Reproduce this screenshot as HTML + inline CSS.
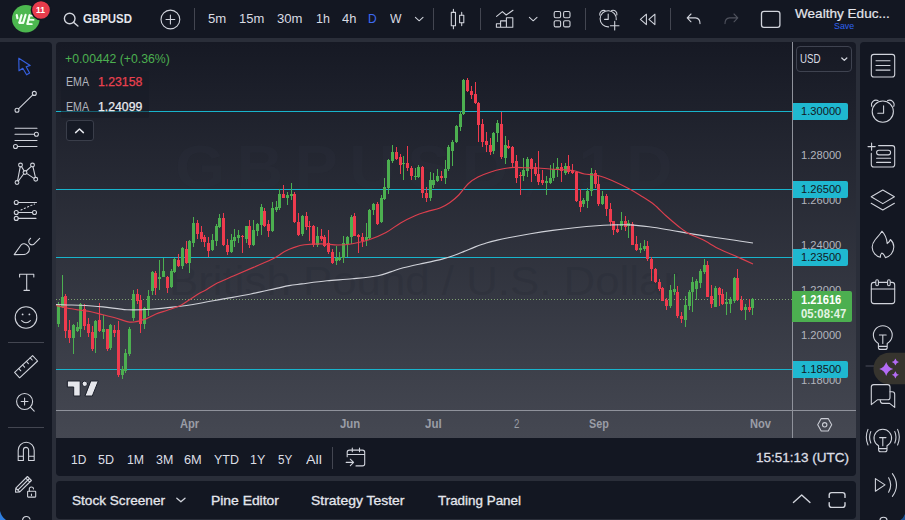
<!DOCTYPE html><html><head><meta charset="utf-8"><title>GBPUSD chart</title><style>

html,body{margin:0;padding:0}
body{width:905px;height:520px;overflow:hidden;position:relative;background:#2a2e39;font-family:"Liberation Sans",Arial,sans-serif}
.p{position:absolute}
.tx{position:absolute;white-space:nowrap;transform-origin:0 0;display:block}
svg{position:absolute;left:0;top:0}

</style></head><body>
<div class="p" style="left:0;top:0;width:905px;height:38px;background:#131722"></div>
<div class="p" style="left:0;top:42px;width:52px;height:478px;background:#131722;border-top-right-radius:4px"></div>
<div class="p" style="left:860px;top:42px;width:45px;height:478px;background:#131722;border-top-left-radius:4px"></div>
<div class="p" style="left:56px;top:42px;width:800px;height:434px;border-radius:4px;overflow:hidden;background:linear-gradient(180deg,#161924 0%,#454852 100%);background-size:100% 396px;background-repeat:no-repeat">
<div class="p" style="left:0;top:396px;width:800px;height:38px;background:#131722"></div>
</div>
<div class="p" style="left:56px;top:481px;width:800px;height:37.5px;background:#131722;border-radius:4px"></div>
<span id="w0" class="tx" style="left:175.00px;top:136.02px;font-size:62.00px;line-height:62.00px;color:rgba(46,50,62,0.24);font-weight:700;transform:scaleX(1.0410);letter-spacing:11px;">GBPUSD, 1D</span>
<span id="w1" class="tx" style="left:169.00px;top:260.84px;font-size:40.00px;line-height:40.00px;color:rgba(38,42,53,0.3);font-weight:400;transform:scaleX(1.0955);">British Pound / U.S. Dollar</span>
<svg width="905" height="520" viewBox="0 0 905 520">
<g shape-rendering="crispEdges"><rect x="56" y="111" width="737" height="1" fill="#18b4cc"/><rect x="56" y="189" width="737" height="1" fill="#18b4cc"/><rect x="56" y="257" width="737" height="1" fill="#18b4cc"/><rect x="56" y="369" width="737" height="1" fill="#18b4cc"/><line x1="56" y1="299.5" x2="793" y2="299.5" stroke="#7da070" stroke-width="1" stroke-dasharray="1 2" shape-rendering="crispEdges"/><rect x="58" y="302" width="1" height="25" fill="#4caf50"/><rect x="57" y="304" width="3" height="20" fill="#4caf50"/><rect x="62" y="275" width="1" height="33" fill="#4caf50"/><rect x="61" y="297" width="3" height="10" fill="#4caf50"/><rect x="65" y="294" width="1" height="44" fill="#ee3b4e"/><rect x="64" y="296" width="3" height="35" fill="#ee3b4e"/><rect x="69" y="320" width="1" height="23" fill="#ee3b4e"/><rect x="68" y="330" width="3" height="8" fill="#ee3b4e"/><rect x="73" y="324" width="1" height="30" fill="#4caf50"/><rect x="72" y="325" width="3" height="13" fill="#4caf50"/><rect x="77" y="322" width="1" height="10" fill="#4caf50"/><rect x="76" y="327" width="3" height="4" fill="#4caf50"/><rect x="80" y="303" width="1" height="34" fill="#4caf50"/><rect x="79" y="304" width="3" height="25" fill="#4caf50"/><rect x="84" y="304" width="1" height="26" fill="#ee3b4e"/><rect x="83" y="309" width="3" height="17" fill="#ee3b4e"/><rect x="88" y="318" width="1" height="19" fill="#ee3b4e"/><rect x="87" y="324" width="3" height="9" fill="#ee3b4e"/><rect x="92" y="326" width="1" height="25" fill="#ee3b4e"/><rect x="91" y="332" width="3" height="17" fill="#ee3b4e"/><rect x="95" y="320" width="1" height="33" fill="#4caf50"/><rect x="94" y="321" width="3" height="17" fill="#4caf50"/><rect x="99" y="303" width="1" height="29" fill="#ee3b4e"/><rect x="98" y="320" width="3" height="11" fill="#ee3b4e"/><rect x="103" y="315" width="1" height="24" fill="#4caf50"/><rect x="102" y="329" width="3" height="3" fill="#4caf50"/><rect x="107" y="329" width="1" height="22" fill="#ee3b4e"/><rect x="106" y="329" width="3" height="20" fill="#ee3b4e"/><rect x="110" y="324" width="1" height="26" fill="#4caf50"/><rect x="109" y="325" width="3" height="23" fill="#4caf50"/><rect x="114" y="325" width="1" height="12" fill="#ee3b4e"/><rect x="113" y="330" width="3" height="3" fill="#ee3b4e"/><rect x="118" y="321" width="1" height="56" fill="#ee3b4e"/><rect x="117" y="330" width="3" height="45" fill="#ee3b4e"/><rect x="122" y="366" width="1" height="13" fill="#4caf50"/><rect x="121" y="369" width="3" height="6" fill="#4caf50"/><rect x="125" y="349" width="1" height="24" fill="#4caf50"/><rect x="124" y="353" width="3" height="18" fill="#4caf50"/><rect x="129" y="327" width="1" height="29" fill="#4caf50"/><rect x="128" y="329" width="3" height="25" fill="#4caf50"/><rect x="133" y="290" width="1" height="31" fill="#4caf50"/><rect x="132" y="294" width="3" height="24" fill="#4caf50"/><rect x="137" y="289" width="1" height="15" fill="#ee3b4e"/><rect x="136" y="294" width="3" height="7" fill="#ee3b4e"/><rect x="140" y="295" width="1" height="38" fill="#ee3b4e"/><rect x="139" y="300" width="3" height="24" fill="#ee3b4e"/><rect x="144" y="307" width="1" height="22" fill="#4caf50"/><rect x="143" y="308" width="3" height="16" fill="#4caf50"/><rect x="148" y="290" width="1" height="26" fill="#4caf50"/><rect x="147" y="296" width="3" height="14" fill="#4caf50"/><rect x="152" y="271" width="1" height="24" fill="#4caf50"/><rect x="151" y="272" width="3" height="19" fill="#4caf50"/><rect x="155" y="271" width="1" height="24" fill="#ee3b4e"/><rect x="154" y="273" width="3" height="15" fill="#ee3b4e"/><rect x="159" y="260" width="1" height="30" fill="#4caf50"/><rect x="158" y="277" width="3" height="2" fill="#4caf50"/><rect x="163" y="258" width="1" height="19" fill="#4caf50"/><rect x="162" y="271" width="3" height="6" fill="#4caf50"/><rect x="167" y="276" width="1" height="17" fill="#ee3b4e"/><rect x="166" y="277" width="3" height="11" fill="#ee3b4e"/><rect x="171" y="269" width="1" height="19" fill="#4caf50"/><rect x="170" y="271" width="3" height="16" fill="#4caf50"/><rect x="174" y="258" width="1" height="15" fill="#4caf50"/><rect x="173" y="259" width="3" height="13" fill="#4caf50"/><rect x="178" y="254" width="1" height="13" fill="#ee3b4e"/><rect x="177" y="260" width="3" height="6" fill="#ee3b4e"/><rect x="182" y="247" width="1" height="22" fill="#4caf50"/><rect x="181" y="248" width="3" height="18" fill="#4caf50"/><rect x="186" y="241" width="1" height="23" fill="#ee3b4e"/><rect x="185" y="249" width="3" height="14" fill="#ee3b4e"/><rect x="189" y="240" width="1" height="33" fill="#4caf50"/><rect x="188" y="241" width="3" height="22" fill="#4caf50"/><rect x="193" y="217" width="1" height="30" fill="#4caf50"/><rect x="192" y="223" width="3" height="20" fill="#4caf50"/><rect x="197" y="220" width="1" height="19" fill="#ee3b4e"/><rect x="196" y="223" width="3" height="11" fill="#ee3b4e"/><rect x="201" y="226" width="1" height="16" fill="#ee3b4e"/><rect x="200" y="232" width="3" height="7" fill="#ee3b4e"/><rect x="204" y="235" width="1" height="12" fill="#ee3b4e"/><rect x="203" y="237" width="3" height="5" fill="#ee3b4e"/><rect x="208" y="237" width="1" height="20" fill="#ee3b4e"/><rect x="207" y="243" width="3" height="8" fill="#ee3b4e"/><rect x="212" y="234" width="1" height="17" fill="#4caf50"/><rect x="211" y="240" width="3" height="10" fill="#4caf50"/><rect x="216" y="224" width="1" height="22" fill="#4caf50"/><rect x="215" y="226" width="3" height="15" fill="#4caf50"/><rect x="219" y="214" width="1" height="14" fill="#4caf50"/><rect x="218" y="218" width="3" height="9" fill="#4caf50"/><rect x="223" y="213" width="1" height="33" fill="#ee3b4e"/><rect x="222" y="218" width="3" height="27" fill="#ee3b4e"/><rect x="227" y="239" width="1" height="16" fill="#ee3b4e"/><rect x="226" y="245" width="3" height="7" fill="#ee3b4e"/><rect x="231" y="234" width="1" height="19" fill="#4caf50"/><rect x="230" y="240" width="3" height="12" fill="#4caf50"/><rect x="234" y="229" width="1" height="18" fill="#4caf50"/><rect x="233" y="237" width="3" height="4" fill="#4caf50"/><rect x="238" y="230" width="1" height="13" fill="#4caf50"/><rect x="237" y="235" width="3" height="3" fill="#4caf50"/><rect x="242" y="235" width="1" height="18" fill="#ee3b4e"/><rect x="241" y="236" width="3" height="1" fill="#ee3b4e"/><rect x="246" y="226" width="1" height="17" fill="#4caf50"/><rect x="245" y="226" width="3" height="13" fill="#4caf50"/><rect x="249" y="220" width="1" height="28" fill="#ee3b4e"/><rect x="248" y="226" width="3" height="19" fill="#ee3b4e"/><rect x="253" y="220" width="1" height="26" fill="#4caf50"/><rect x="252" y="230" width="3" height="15" fill="#4caf50"/><rect x="257" y="223" width="1" height="13" fill="#4caf50"/><rect x="256" y="224" width="3" height="7" fill="#4caf50"/><rect x="261" y="204" width="1" height="31" fill="#4caf50"/><rect x="260" y="207" width="3" height="18" fill="#4caf50"/><rect x="264" y="208" width="1" height="19" fill="#ee3b4e"/><rect x="263" y="211" width="3" height="15" fill="#ee3b4e"/><rect x="268" y="220" width="1" height="17" fill="#ee3b4e"/><rect x="267" y="224" width="3" height="7" fill="#ee3b4e"/><rect x="272" y="202" width="1" height="30" fill="#4caf50"/><rect x="271" y="208" width="3" height="23" fill="#4caf50"/><rect x="276" y="201" width="1" height="11" fill="#4caf50"/><rect x="275" y="207" width="3" height="3" fill="#4caf50"/><rect x="279" y="189" width="1" height="21" fill="#4caf50"/><rect x="278" y="194" width="3" height="14" fill="#4caf50"/><rect x="283" y="185" width="1" height="13" fill="#ee3b4e"/><rect x="282" y="194" width="3" height="4" fill="#ee3b4e"/><rect x="287" y="192" width="1" height="13" fill="#4caf50"/><rect x="286" y="195" width="3" height="3" fill="#4caf50"/><rect x="291" y="183" width="1" height="17" fill="#4caf50"/><rect x="290" y="194" width="3" height="2" fill="#4caf50"/><rect x="294" y="192" width="1" height="31" fill="#ee3b4e"/><rect x="293" y="194" width="3" height="28" fill="#ee3b4e"/><rect x="298" y="213" width="1" height="23" fill="#ee3b4e"/><rect x="297" y="222" width="3" height="13" fill="#ee3b4e"/><rect x="302" y="215" width="1" height="21" fill="#4caf50"/><rect x="301" y="216" width="3" height="18" fill="#4caf50"/><rect x="306" y="212" width="1" height="18" fill="#ee3b4e"/><rect x="305" y="216" width="3" height="11" fill="#ee3b4e"/><rect x="309" y="221" width="1" height="20" fill="#ee3b4e"/><rect x="308" y="226" width="3" height="1" fill="#ee3b4e"/><rect x="313" y="225" width="1" height="22" fill="#ee3b4e"/><rect x="312" y="226" width="3" height="19" fill="#ee3b4e"/><rect x="317" y="227" width="1" height="20" fill="#4caf50"/><rect x="316" y="236" width="3" height="9" fill="#4caf50"/><rect x="321" y="229" width="1" height="12" fill="#ee3b4e"/><rect x="320" y="236" width="3" height="3" fill="#ee3b4e"/><rect x="324" y="235" width="1" height="12" fill="#ee3b4e"/><rect x="323" y="237" width="3" height="9" fill="#ee3b4e"/><rect x="328" y="230" width="1" height="24" fill="#ee3b4e"/><rect x="327" y="243" width="3" height="9" fill="#ee3b4e"/><rect x="332" y="249" width="1" height="15" fill="#ee3b4e"/><rect x="331" y="252" width="3" height="11" fill="#ee3b4e"/><rect x="336" y="246" width="1" height="19" fill="#4caf50"/><rect x="335" y="258" width="3" height="3" fill="#4caf50"/><rect x="339" y="252" width="1" height="9" fill="#4caf50"/><rect x="338" y="257" width="3" height="3" fill="#4caf50"/><rect x="343" y="236" width="1" height="27" fill="#4caf50"/><rect x="342" y="243" width="3" height="15" fill="#4caf50"/><rect x="347" y="236" width="1" height="21" fill="#4caf50"/><rect x="346" y="237" width="3" height="7" fill="#4caf50"/><rect x="351" y="215" width="1" height="29" fill="#4caf50"/><rect x="350" y="217" width="3" height="20" fill="#4caf50"/><rect x="354" y="213" width="1" height="23" fill="#ee3b4e"/><rect x="353" y="216" width="3" height="20" fill="#ee3b4e"/><rect x="358" y="234" width="1" height="19" fill="#ee3b4e"/><rect x="357" y="235" width="3" height="2" fill="#ee3b4e"/><rect x="362" y="233" width="1" height="14" fill="#ee3b4e"/><rect x="361" y="237" width="3" height="4" fill="#ee3b4e"/><rect x="366" y="223" width="1" height="23" fill="#4caf50"/><rect x="365" y="237" width="3" height="3" fill="#4caf50"/><rect x="369" y="209" width="1" height="30" fill="#4caf50"/><rect x="368" y="210" width="3" height="28" fill="#4caf50"/><rect x="373" y="203" width="1" height="12" fill="#4caf50"/><rect x="372" y="204" width="3" height="6" fill="#4caf50"/><rect x="377" y="202" width="1" height="23" fill="#ee3b4e"/><rect x="376" y="204" width="3" height="20" fill="#ee3b4e"/><rect x="381" y="195" width="1" height="28" fill="#4caf50"/><rect x="380" y="198" width="3" height="24" fill="#4caf50"/><rect x="384" y="178" width="1" height="22" fill="#4caf50"/><rect x="383" y="187" width="3" height="12" fill="#4caf50"/><rect x="388" y="159" width="1" height="35" fill="#4caf50"/><rect x="387" y="160" width="3" height="28" fill="#4caf50"/><rect x="392" y="145" width="1" height="18" fill="#4caf50"/><rect x="391" y="152" width="3" height="9" fill="#4caf50"/><rect x="396" y="147" width="1" height="13" fill="#ee3b4e"/><rect x="395" y="152" width="3" height="7" fill="#ee3b4e"/><rect x="400" y="154" width="1" height="20" fill="#ee3b4e"/><rect x="399" y="157" width="3" height="8" fill="#ee3b4e"/><rect x="403" y="156" width="1" height="24" fill="#4caf50"/><rect x="402" y="163" width="3" height="1" fill="#4caf50"/><rect x="407" y="146" width="1" height="25" fill="#ee3b4e"/><rect x="406" y="163" width="3" height="5" fill="#ee3b4e"/><rect x="411" y="166" width="1" height="14" fill="#ee3b4e"/><rect x="410" y="168" width="3" height="8" fill="#ee3b4e"/><rect x="415" y="168" width="1" height="12" fill="#4caf50"/><rect x="414" y="176" width="3" height="1" fill="#4caf50"/><rect x="418" y="165" width="1" height="13" fill="#4caf50"/><rect x="417" y="167" width="3" height="10" fill="#4caf50"/><rect x="422" y="166" width="1" height="32" fill="#ee3b4e"/><rect x="421" y="167" width="3" height="26" fill="#ee3b4e"/><rect x="426" y="187" width="1" height="15" fill="#ee3b4e"/><rect x="425" y="193" width="3" height="5" fill="#ee3b4e"/><rect x="430" y="172" width="1" height="29" fill="#4caf50"/><rect x="429" y="180" width="3" height="18" fill="#4caf50"/><rect x="433" y="173" width="1" height="15" fill="#4caf50"/><rect x="432" y="180" width="3" height="5" fill="#4caf50"/><rect x="437" y="169" width="1" height="13" fill="#4caf50"/><rect x="436" y="176" width="3" height="5" fill="#4caf50"/><rect x="441" y="171" width="1" height="10" fill="#ee3b4e"/><rect x="440" y="176" width="3" height="2" fill="#ee3b4e"/><rect x="445" y="160" width="1" height="24" fill="#4caf50"/><rect x="444" y="169" width="3" height="9" fill="#4caf50"/><rect x="448" y="145" width="1" height="26" fill="#4caf50"/><rect x="447" y="147" width="3" height="22" fill="#4caf50"/><rect x="452" y="140" width="1" height="26" fill="#4caf50"/><rect x="451" y="142" width="3" height="9" fill="#4caf50"/><rect x="456" y="125" width="1" height="18" fill="#4caf50"/><rect x="455" y="126" width="3" height="16" fill="#4caf50"/><rect x="460" y="111" width="1" height="20" fill="#4caf50"/><rect x="459" y="114" width="3" height="13" fill="#4caf50"/><rect x="463" y="79" width="1" height="36" fill="#4caf50"/><rect x="462" y="80" width="3" height="34" fill="#4caf50"/><rect x="467" y="78" width="1" height="14" fill="#ee3b4e"/><rect x="466" y="80" width="3" height="11" fill="#ee3b4e"/><rect x="471" y="86" width="1" height="13" fill="#ee3b4e"/><rect x="470" y="91" width="3" height="4" fill="#ee3b4e"/><rect x="475" y="82" width="1" height="22" fill="#ee3b4e"/><rect x="474" y="94" width="3" height="9" fill="#ee3b4e"/><rect x="478" y="102" width="1" height="40" fill="#ee3b4e"/><rect x="477" y="103" width="3" height="22" fill="#ee3b4e"/><rect x="482" y="119" width="1" height="28" fill="#ee3b4e"/><rect x="481" y="124" width="3" height="18" fill="#ee3b4e"/><rect x="486" y="132" width="1" height="20" fill="#ee3b4e"/><rect x="485" y="141" width="3" height="4" fill="#ee3b4e"/><rect x="490" y="138" width="1" height="17" fill="#ee3b4e"/><rect x="489" y="145" width="3" height="7" fill="#ee3b4e"/><rect x="493" y="132" width="1" height="22" fill="#4caf50"/><rect x="492" y="133" width="3" height="18" fill="#4caf50"/><rect x="497" y="120" width="1" height="22" fill="#4caf50"/><rect x="496" y="123" width="3" height="10" fill="#4caf50"/><rect x="501" y="112" width="1" height="47" fill="#ee3b4e"/><rect x="500" y="124" width="3" height="33" fill="#ee3b4e"/><rect x="505" y="136" width="1" height="28" fill="#4caf50"/><rect x="504" y="145" width="3" height="13" fill="#4caf50"/><rect x="508" y="140" width="1" height="9" fill="#ee3b4e"/><rect x="507" y="146" width="3" height="2" fill="#ee3b4e"/><rect x="512" y="146" width="1" height="21" fill="#ee3b4e"/><rect x="511" y="147" width="3" height="16" fill="#ee3b4e"/><rect x="516" y="155" width="1" height="28" fill="#ee3b4e"/><rect x="515" y="161" width="3" height="17" fill="#ee3b4e"/><rect x="520" y="172" width="1" height="23" fill="#ee3b4e"/><rect x="519" y="175" width="3" height="1" fill="#ee3b4e"/><rect x="523" y="158" width="1" height="23" fill="#4caf50"/><rect x="522" y="170" width="3" height="6" fill="#4caf50"/><rect x="527" y="157" width="1" height="20" fill="#4caf50"/><rect x="526" y="159" width="3" height="12" fill="#4caf50"/><rect x="531" y="158" width="1" height="24" fill="#ee3b4e"/><rect x="530" y="159" width="3" height="10" fill="#ee3b4e"/><rect x="535" y="163" width="1" height="13" fill="#ee3b4e"/><rect x="534" y="167" width="3" height="7" fill="#ee3b4e"/><rect x="538" y="151" width="1" height="34" fill="#ee3b4e"/><rect x="537" y="174" width="3" height="8" fill="#ee3b4e"/><rect x="542" y="170" width="1" height="15" fill="#ee3b4e"/><rect x="541" y="180" width="3" height="3" fill="#ee3b4e"/><rect x="546" y="176" width="1" height="19" fill="#4caf50"/><rect x="545" y="181" width="3" height="2" fill="#4caf50"/><rect x="550" y="165" width="1" height="19" fill="#4caf50"/><rect x="549" y="178" width="3" height="5" fill="#4caf50"/><rect x="553" y="163" width="1" height="18" fill="#4caf50"/><rect x="552" y="169" width="3" height="9" fill="#4caf50"/><rect x="557" y="158" width="1" height="19" fill="#4caf50"/><rect x="556" y="167" width="3" height="3" fill="#4caf50"/><rect x="561" y="163" width="1" height="19" fill="#ee3b4e"/><rect x="560" y="167" width="3" height="4" fill="#ee3b4e"/><rect x="565" y="163" width="1" height="12" fill="#4caf50"/><rect x="564" y="166" width="3" height="7" fill="#4caf50"/><rect x="568" y="155" width="1" height="19" fill="#ee3b4e"/><rect x="567" y="166" width="3" height="6" fill="#ee3b4e"/><rect x="572" y="164" width="1" height="10" fill="#ee3b4e"/><rect x="571" y="170" width="3" height="3" fill="#ee3b4e"/><rect x="576" y="171" width="1" height="31" fill="#ee3b4e"/><rect x="575" y="172" width="3" height="29" fill="#ee3b4e"/><rect x="580" y="189" width="1" height="23" fill="#ee3b4e"/><rect x="579" y="201" width="3" height="6" fill="#ee3b4e"/><rect x="583" y="198" width="1" height="9" fill="#4caf50"/><rect x="582" y="200" width="3" height="4" fill="#4caf50"/><rect x="587" y="188" width="1" height="20" fill="#4caf50"/><rect x="586" y="191" width="3" height="10" fill="#4caf50"/><rect x="591" y="168" width="1" height="28" fill="#4caf50"/><rect x="590" y="173" width="3" height="18" fill="#4caf50"/><rect x="595" y="170" width="1" height="18" fill="#ee3b4e"/><rect x="594" y="173" width="3" height="11" fill="#ee3b4e"/><rect x="598" y="175" width="1" height="31" fill="#ee3b4e"/><rect x="597" y="184" width="3" height="20" fill="#ee3b4e"/><rect x="602" y="191" width="1" height="14" fill="#4caf50"/><rect x="601" y="196" width="3" height="8" fill="#4caf50"/><rect x="606" y="194" width="1" height="22" fill="#ee3b4e"/><rect x="605" y="196" width="3" height="13" fill="#ee3b4e"/><rect x="610" y="203" width="1" height="23" fill="#ee3b4e"/><rect x="609" y="209" width="3" height="13" fill="#ee3b4e"/><rect x="613" y="221" width="1" height="14" fill="#ee3b4e"/><rect x="612" y="221" width="3" height="9" fill="#ee3b4e"/><rect x="617" y="224" width="1" height="9" fill="#ee3b4e"/><rect x="616" y="229" width="3" height="3" fill="#ee3b4e"/><rect x="621" y="212" width="1" height="18" fill="#4caf50"/><rect x="620" y="221" width="3" height="5" fill="#4caf50"/><rect x="625" y="216" width="1" height="15" fill="#ee3b4e"/><rect x="624" y="221" width="3" height="6" fill="#ee3b4e"/><rect x="628" y="220" width="1" height="18" fill="#4caf50"/><rect x="627" y="223" width="3" height="3" fill="#4caf50"/><rect x="632" y="222" width="1" height="23" fill="#ee3b4e"/><rect x="631" y="224" width="3" height="21" fill="#ee3b4e"/><rect x="636" y="236" width="1" height="15" fill="#ee3b4e"/><rect x="635" y="244" width="3" height="6" fill="#ee3b4e"/><rect x="640" y="243" width="1" height="10" fill="#4caf50"/><rect x="639" y="248" width="3" height="2" fill="#4caf50"/><rect x="644" y="240" width="1" height="11" fill="#4caf50"/><rect x="643" y="246" width="3" height="3" fill="#4caf50"/><rect x="647" y="241" width="1" height="20" fill="#ee3b4e"/><rect x="646" y="246" width="3" height="13" fill="#ee3b4e"/><rect x="651" y="257" width="1" height="24" fill="#ee3b4e"/><rect x="650" y="259" width="3" height="10" fill="#ee3b4e"/><rect x="655" y="268" width="1" height="15" fill="#ee3b4e"/><rect x="654" y="269" width="3" height="13" fill="#ee3b4e"/><rect x="659" y="279" width="1" height="12" fill="#ee3b4e"/><rect x="658" y="282" width="3" height="7" fill="#ee3b4e"/><rect x="662" y="287" width="1" height="14" fill="#ee3b4e"/><rect x="661" y="288" width="3" height="13" fill="#ee3b4e"/><rect x="666" y="298" width="1" height="12" fill="#ee3b4e"/><rect x="665" y="300" width="3" height="6" fill="#ee3b4e"/><rect x="670" y="285" width="1" height="23" fill="#4caf50"/><rect x="669" y="290" width="3" height="16" fill="#4caf50"/><rect x="674" y="274" width="1" height="21" fill="#4caf50"/><rect x="673" y="289" width="3" height="3" fill="#4caf50"/><rect x="677" y="286" width="1" height="32" fill="#ee3b4e"/><rect x="676" y="292" width="3" height="24" fill="#ee3b4e"/><rect x="681" y="312" width="1" height="11" fill="#ee3b4e"/><rect x="680" y="316" width="3" height="3" fill="#ee3b4e"/><rect x="685" y="296" width="1" height="31" fill="#4caf50"/><rect x="684" y="305" width="3" height="15" fill="#4caf50"/><rect x="689" y="290" width="1" height="20" fill="#4caf50"/><rect x="688" y="292" width="3" height="14" fill="#4caf50"/><rect x="692" y="277" width="1" height="35" fill="#4caf50"/><rect x="691" y="282" width="3" height="10" fill="#4caf50"/><rect x="696" y="279" width="1" height="21" fill="#4caf50"/><rect x="695" y="281" width="3" height="8" fill="#4caf50"/><rect x="700" y="269" width="1" height="19" fill="#4caf50"/><rect x="699" y="271" width="3" height="12" fill="#4caf50"/><rect x="704" y="259" width="1" height="15" fill="#4caf50"/><rect x="703" y="265" width="3" height="7" fill="#4caf50"/><rect x="707" y="261" width="1" height="36" fill="#ee3b4e"/><rect x="706" y="265" width="3" height="32" fill="#ee3b4e"/><rect x="711" y="285" width="1" height="23" fill="#ee3b4e"/><rect x="710" y="296" width="3" height="8" fill="#ee3b4e"/><rect x="715" y="286" width="1" height="21" fill="#4caf50"/><rect x="714" y="288" width="3" height="19" fill="#4caf50"/><rect x="719" y="287" width="1" height="19" fill="#ee3b4e"/><rect x="718" y="288" width="3" height="7" fill="#ee3b4e"/><rect x="722" y="289" width="1" height="16" fill="#ee3b4e"/><rect x="721" y="294" width="3" height="10" fill="#ee3b4e"/><rect x="726" y="292" width="1" height="23" fill="#4caf50"/><rect x="725" y="302" width="3" height="2" fill="#4caf50"/><rect x="730" y="297" width="1" height="16" fill="#4caf50"/><rect x="729" y="299" width="3" height="5" fill="#4caf50"/><rect x="734" y="277" width="1" height="26" fill="#4caf50"/><rect x="733" y="278" width="3" height="23" fill="#4caf50"/><rect x="737" y="269" width="1" height="32" fill="#ee3b4e"/><rect x="736" y="278" width="3" height="22" fill="#ee3b4e"/><rect x="741" y="296" width="1" height="15" fill="#ee3b4e"/><rect x="740" y="300" width="3" height="10" fill="#ee3b4e"/><rect x="745" y="304" width="1" height="16" fill="#4caf50"/><rect x="744" y="307" width="3" height="3" fill="#4caf50"/><rect x="749" y="299" width="1" height="13" fill="#ee3b4e"/><rect x="748" y="307" width="3" height="3" fill="#ee3b4e"/><rect x="752" y="298" width="1" height="17" fill="#4caf50"/><rect x="751" y="299" width="3" height="9" fill="#4caf50"/></g>
<path d="M56.0 304.5 C57.8 304.6 63.2 304.9 67.0 305.0 C70.8 305.1 73.0 304.9 79.0 305.2 C85.0 305.5 95.0 306.1 103.0 306.9 C111.0 307.7 119.0 309.4 127.0 309.8 C135.0 310.2 143.0 309.8 151.0 309.3 C159.0 308.8 166.8 307.9 175.0 306.9 C183.2 305.9 191.6 304.6 200.0 303.2 C208.4 301.8 216.9 300.1 225.4 298.6 C233.9 297.1 242.3 295.7 250.8 294.0 C259.3 292.3 269.8 289.8 276.2 288.4 C282.6 287.0 284.8 286.4 289.0 285.6 C293.2 284.9 295.4 284.7 301.7 283.9 C308.0 283.1 318.5 281.6 327.0 280.8 C335.5 280.0 344.0 279.7 352.5 278.8 C361.0 277.9 371.5 276.9 377.9 275.7 C384.2 274.5 386.4 273.2 390.6 271.9 C394.8 270.6 398.4 269.1 403.3 267.8 C408.2 266.5 413.5 265.4 420.0 264.0 C426.5 262.6 436.6 260.5 442.1 259.1 C447.6 257.7 449.4 257.1 453.1 255.8 C456.8 254.5 460.5 252.9 464.2 251.4 C467.9 249.9 471.5 248.3 475.2 246.9 C478.9 245.5 482.6 244.1 486.3 243.0 C490.0 241.9 493.6 241.0 497.3 240.1 C501.0 239.2 502.9 238.8 508.4 237.7 C513.9 236.6 523.1 234.9 530.5 233.7 C537.9 232.5 545.2 231.4 552.6 230.4 C560.0 229.4 567.3 228.5 574.7 227.7 C582.1 226.9 590.9 226.1 596.8 225.7 C602.7 225.2 604.5 225.1 610.0 225.0 C615.5 224.9 623.5 224.6 630.0 224.9 C636.5 225.2 642.2 225.9 649.0 226.8 C655.8 227.7 664.2 229.1 671.0 230.2 C677.8 231.3 683.2 232.5 690.0 233.6 C696.8 234.7 704.5 235.9 712.0 237.0 C719.5 238.1 728.2 239.3 735.0 240.3 C741.8 241.3 750.0 242.6 753.0 243.0" fill="none" stroke="#cfd1d8" stroke-width="1.15"/><path d="M56.0 305.5 C57.8 305.9 63.2 307.2 67.0 308.0 C70.8 308.8 75.0 309.4 79.0 310.0 C83.0 310.6 87.0 310.9 91.0 311.7 C95.0 312.5 99.0 313.8 103.0 314.8 C107.0 315.8 111.0 316.6 115.0 317.7 C119.0 318.8 123.8 320.9 127.0 321.6 C130.2 322.3 130.8 322.4 134.0 322.0 C137.2 321.6 142.3 320.2 146.0 318.9 C149.7 317.6 152.3 315.5 156.0 314.0 C159.7 312.5 164.0 311.4 168.0 310.0 C172.0 308.6 176.4 307.4 180.0 305.7 C183.6 304.0 186.4 301.7 189.6 299.7 C192.8 297.7 196.4 295.0 199.0 293.5 C201.6 292.0 201.9 292.2 205.0 290.5 C208.1 288.8 212.5 285.4 217.3 283.0 C222.1 280.6 228.0 278.4 234.0 275.8 C240.0 273.2 246.6 270.4 253.4 267.4 C260.2 264.4 269.8 260.3 275.0 257.7 C280.2 255.0 281.4 253.2 284.6 251.5 C287.8 249.8 290.9 248.5 294.2 247.4 C297.5 246.3 299.9 245.4 304.4 244.8 C308.9 244.2 315.4 243.8 321.0 243.8 C326.6 243.8 332.8 245.0 338.0 245.0 C343.2 245.0 347.3 244.7 352.5 243.8 C357.7 242.9 363.4 241.7 369.0 239.8 C374.6 237.9 380.7 235.3 386.0 232.5 C391.3 229.7 395.8 225.7 400.6 222.9 C405.4 220.1 410.6 217.6 415.0 215.7 C419.4 213.8 422.8 212.9 427.0 211.6 C431.2 210.3 436.2 209.5 440.0 208.0 C443.8 206.5 446.9 204.7 450.0 202.5 C453.1 200.3 455.7 198.2 458.8 195.0 C461.9 191.8 465.3 186.5 468.5 183.5 C471.7 180.5 474.4 178.9 478.0 177.0 C481.6 175.1 486.0 173.5 490.0 172.2 C494.0 170.9 498.0 169.8 502.0 169.0 C506.0 168.2 510.0 167.6 514.0 167.4 C518.0 167.2 522.0 167.7 526.0 167.8 C530.0 167.9 534.0 167.8 538.0 168.0 C542.0 168.2 545.6 168.7 550.0 169.0 C554.4 169.3 560.4 169.5 564.6 169.8 C568.8 170.1 571.7 170.3 575.0 171.0 C578.3 171.7 580.4 173.2 584.4 174.0 C588.4 174.8 594.0 174.6 598.8 175.8 C603.6 177.0 607.8 178.8 613.0 181.0 C618.2 183.2 625.2 186.7 630.0 189.3 C634.8 191.9 638.0 194.0 642.0 196.5 C646.0 199.0 650.0 201.3 654.0 204.5 C658.0 207.7 662.0 212.2 666.0 215.8 C670.0 219.4 674.3 223.1 678.0 226.0 C681.7 228.9 683.9 230.9 688.0 233.2 C692.1 235.5 697.3 237.0 702.5 239.6 C707.7 242.2 713.7 246.2 719.3 249.0 C724.9 251.8 730.4 253.8 736.0 256.2 C741.6 258.8 750.2 262.7 753.0 264.0" fill="none" stroke="#dc3f4e" stroke-width="1.15"/>
<g shape-rendering="crispEdges"><rect x="56" y="410" width="800" height="1" fill="#8f929b"/><rect x="792" y="42" width="1" height="396" fill="#8f929b"/></g>
</svg>
<div class="p" style="left:61px;top:71px;width:88px;height:47px;background:rgba(24,28,39,0.55);border-radius:2px"></div>
<div class="p" style="left:65.5px;top:120px;width:28.5px;height:20.5px;border:1px solid #3a3e4a;border-radius:3px;background:#161a25;box-sizing:border-box"></div>
<div class="p" style="left:796px;top:46px;width:56px;height:25.5px;border:1px solid #3f4350;border-radius:4px;box-sizing:border-box"></div>
<svg width="905" height="520" viewBox="0 0 905 520" fill="none" stroke="#d1d4dc" stroke-width="1.08" stroke-linecap="round" stroke-linejoin="round">
<circle cx="25.8" cy="18.8" r="13.8" fill="#4cb74f" stroke="none"/>
<g stroke="#f1fff1" stroke-width="2.2" stroke-linecap="round"><path d="M16.8 15.2L17.4 18.2"/><path d="M21.6 15.2L19.4 22.6"/><path d="M25.6 14.8L23.2 22.8"/><path d="M19.6 22.8L22.8 22.9"/><path d="M29.6 15.2L27.4 24"/><path d="M29.8 15.6L33.4 15.6" stroke-width="1.8"/><path d="M28.8 19.6L33.6 19.8" stroke-width="1.8"/><path d="M27.6 24L31.8 24.2" stroke-width="1.8"/></g>
<circle cx="41" cy="10" r="9.6" fill="#e93c4c" stroke="#131722" stroke-width="1.5"/>
<circle cx="69.7" cy="18.5" r="5.3" stroke-width="1.4"/><path d="M73.6 22.4L77.9 26" stroke-width="1.4"/>
<circle cx="170.4" cy="19.5" r="9.4"/><path d="M166 19.5H174.8M170.4 15.1V23.9"/>
<rect x="194" y="8" width="1" height="22" fill="#434651" stroke="none" shape-rendering="crispEdges"/>
<rect x="433" y="8" width="1" height="22" fill="#434651" stroke="none" shape-rendering="crispEdges"/>
<rect x="480" y="8" width="1" height="22" fill="#434651" stroke="none" shape-rendering="crispEdges"/>
<rect x="585" y="8" width="1" height="22" fill="#434651" stroke="none" shape-rendering="crispEdges"/>
<rect x="670" y="8" width="1" height="22" fill="#434651" stroke="none" shape-rendering="crispEdges"/>
<path d="M415.4 17.4L419.2 20.8L423 17.4"/>
<path d="M529.4 17.4L533.2 20.8L537 17.4"/>
<rect x="451.3" y="12.4" width="4.2" height="13.3"/><path d="M453.4 9.2V12.4M453.4 25.7V28.8"/>
<rect x="459.6" y="15.3" width="4.2" height="7.5"/><path d="M461.7 12.4V15.3M461.7 22.8V25.6"/>
<path d="M496.4 27.3V23.8H500.6V27.3M500.6 27.3V20.9H506.4V27.3M506.4 27.3V17.7H512.8V27.3H496.4"/>
<path d="M496.6 16.4L502.4 11.6L506.2 15L513 10.2"/>
<rect x="554.2" y="11.5" width="6.4" height="6.2" rx="1.4"/>
<rect x="563.6" y="11.5" width="6.4" height="6.2" rx="1.4"/>
<rect x="554.2" y="20.7" width="6.4" height="6.2" rx="1.4"/>
<rect x="563.6" y="20.7" width="6.4" height="6.2" rx="1.4"/>
<path d="M608.6 26.9A8.1 8.1 0 1 1 616.25 19.8"/>
<path d="M599.8 15.2A4 4 0 0 1 605 10.6M611.6 10.5A4 4 0 0 1 616.9 15"/>
<path d="M608.2 14V19.4H604.6"/>
<path d="M610.4 25.7H619M614.7 21.4V30"/>
<path d="M646.4 14.2V24.6L640.4 19.4Z"/><path d="M654.9 14.2V24.6L648.9 19.4Z"/>
<path d="M691 14L687.2 17.9L691 21.8M687.4 17.9H695.5Q700 18.2 700 23.6"/>
<path d="M734 14L737.8 17.9L734 21.8M737.6 17.9H729.5Q725 18.2 725 23.6" stroke="#50535e"/>
<rect x="761.5" y="11.4" width="18.4" height="16" rx="2.4" stroke-width="1.3"/>
<path d="M841.8 58L844.3 60.4L846.8 58" stroke-width="1.3"/>
<path d="M75.6 132.6L79.5 129L83.4 132.6" stroke="#e4e6ec" stroke-width="1.5"/>
<path d="M18.8 58.2L19 70.8L22.8 68.3L26.6 74.8L29.6 73L26.2 66.8L30.2 65.4Z" stroke="#3560e0" stroke-width="1.15"/>
<circle cx="34.3" cy="93.4" r="2"/><circle cx="17" cy="110.2" r="2"/><path d="M18.5 108.8L32.8 94.8"/>
<path d="M15 128.3H37M15 134.3H34.5M15 140.5H37M17.5 146.5H37"/><circle cx="36.4" cy="134.3" r="2"/><circle cx="15.5" cy="146.5" r="2"/>
<path d="M17.6 180.6L20.2 166.9M21.5 166.6L24.2 171M26.2 171L31.3 166.4M33 166.9L35.4 177.4M18.4 181L23.6 174M26.6 173.4L34 178.4"/>
<circle cx="20.50" cy="165.00" r="1.9"/>
<circle cx="32.50" cy="165.00" r="1.9"/>
<circle cx="25.00" cy="172.50" r="1.9"/>
<circle cx="17.00" cy="182.50" r="1.9"/>
<circle cx="35.75" cy="179.25" r="1.9"/>
<circle cx="16.25" cy="202.5" r="2"/><path d="M18.3 202.5H36.5"/>
<circle cx="16.25" cy="212.5" r="2"/><circle cx="34.5" cy="212.5" r="2"/><path d="M18.3 212.5H32.4"/>
<circle cx="16.25" cy="218.4" r="2"/><path d="M18.3 218.4H36"/>
<path d="M21 210L34.5 204" stroke-dasharray="1.2 2.4"/>
<path d="M14.2 254.6L21.2 244.8Q22.6 243.4 24.4 243.8Q28.6 245 29.5 248.8Q29.6 251.5 27 253.4Q25.8 254.3 24.5 254.4Z"/><path d="M30.6 238.2Q28.2 240 28.8 242.4Q29.8 245.2 32.6 244.8Q33.6 244.6 34.5 243.6L39.7 238.3"/>
<path d="M19.6 277V274.3H33.8V277M26.7 274.3V290.4M24 290.4H29.4"/>
<circle cx="26" cy="317.5" r="10.8"/><path d="M21.6 320.6Q26 325 30.4 320.6"/><circle cx="22.6" cy="314.4" r="0.9" fill="#d1d4dc" stroke="none"/><circle cx="29.4" cy="314.4" r="0.9" fill="#d1d4dc" stroke="none"/>
<rect x="8" y="342" width="36" height="1" fill="#434651" stroke="none" shape-rendering="crispEdges"/>
<rect x="8" y="427" width="36" height="1" fill="#434651" stroke="none" shape-rendering="crispEdges"/>
<path d="M14.6 372.4L32.6 355.6L37.6 361L19.6 377.8Z"/><path d="M18.8 368.6L20.8 370.8M22.6 365L24.6 367.2M26.4 361.4L28.4 363.6M30.2 357.8L32.2 360"/>
<circle cx="24.6" cy="401.5" r="8"/><path d="M30.4 407.2L34.2 411.2M21.2 401.5H28M24.6 398.1V404.9"/>
<path d="M18.2 460.5V450.2A8 8 0 0 1 34.2 450.2V460.5H28.6V450A2.6 2.6 0 0 0 23.4 450V460.5ZM18.2 456.3H23.4M28.6 456.3H34.2"/>
<path d="M15.5 492.3L15.8 488.1L27.4 476.5L31.4 480.5L19.8 491.9ZM15.8 488.1L19.8 491.9M17.8 490.1L29.4 478.5M25.7 478.1L29.8 482.1"/>
<rect x="27.6" y="491.2" width="8.1" height="5.9" rx="0.6"/><path d="M29.3 491.2V489.2A2.1 2.1 0 0 1 33.5 488.9M31.45 494V495.6"/>
<path d="M22.6 519.6A3.8 3.8 0 0 1 30 519.2"/>
<rect x="871.3" y="54.4" width="23.4" height="22.6" rx="2.6"/><path d="M876 60.8H890M876 65.5H890M876 70.1H890"/>
<circle cx="882.8" cy="111.6" r="10.6"/><path d="M871.8 106.4A4.6 4.6 0 0 1 878 100.6M887.6 100.6A4.6 4.6 0 0 1 893.8 106.4M883.6 105.8V113.2H877.8"/>
<path d="M868 146.6H875.2M871.6 143V150.2"/>
<path d="M878.6 145.6H892.2Q894.7 145.6 894.7 148.2V164.4Q894.7 167 892.2 167H873.8Q871.3 167 871.3 164.4V153.4"/>
<rect x="876.6" y="150.3" width="14" height="4.6" rx="2.3"/><path d="M876.6 158.3H890.6M876.6 162.4H890.6"/>
<path d="M882.8 190L894.4 196.8L882.8 203.6L871.2 196.8ZM871.2 203.2L882.8 210L894.4 203.2"/>
<path d="M881.9 231.2C880 234.5 877 237.5 875 240C872.8 242.8 872.1 245.2 872.2 247.5C872.4 252.5 876 256.5 880.4 257.3C880.2 255.5 880.8 254 881.8 253.1C883.2 253.8 884.6 255.4 885.4 257.6C890.5 256.5 893.6 252 893.8 247C893.9 243.8 892.4 241.4 890.4 239.5C889.8 241.5 888.6 242.8 887.2 243.6C886.8 238.5 884.8 234.2 881.9 231.2Z"/>
<rect x="871.3" y="282.4" width="23.4" height="21.2" rx="2.6"/><path d="M871.3 289H894.7"/><rect x="875.8" y="279.8" width="2.6" height="6" rx="1.2" fill="#131722"/><rect x="887.6" y="279.8" width="2.6" height="6" rx="1.2" fill="#131722"/>
<path d="M878.4 343.4A9.4 9.4 0 1 1 887.2 343.4V346.4H878.4ZM878.4 346.4V347.4Q878.4 349.4 880.4 349.4H885.2Q887.2 349.4 887.2 347.4V346.4M879.4 335H886.2M882.8 335V343.4"/>
<path d="M866 366H874" stroke="#4c4f5a" stroke-width="1"/>
<rect x="873.5" y="352.7" width="50" height="31.6" rx="15.8" fill="#36342e" stroke="none"/>
<path d="M886.20 361.90Q887.74 367.36 893.20 368.90Q887.74 370.44 886.20 375.90Q884.66 370.44 879.20 368.90Q884.66 367.36 886.20 361.90Z" fill="#b36bf5" stroke="none"/>
<path d="M895.40 358.40Q896.19 361.21 899.00 362.00Q896.19 362.79 895.40 365.60Q894.61 362.79 891.80 362.00Q894.61 361.21 895.40 358.40Z" fill="#b36bf5" stroke="none"/>
<path d="M895.40 371.20Q896.19 374.01 899.00 374.80Q896.19 375.59 895.40 378.40Q894.61 375.59 891.80 374.80Q894.61 374.01 895.40 371.20Z" fill="#b36bf5" stroke="none"/>
<path d="M871.3 404.6V387Q871.3 384.6 873.8 384.6H887.6Q890 384.6 890 387V397.4Q890 399.8 887.6 399.8H877.4Z"/>
<path d="M890 391.8H892.2Q894.7 391.8 894.7 394.2V407.4L889.6 403.4H882.6Q880.4 403.4 880.2 400"/>
<path d="M878.6 445.8A8.8 8.8 0 1 1 887 445.8V448.6H878.6ZM878.6 448.6V449.8Q878.6 451.8 880.6 451.8H885Q887 451.8 887 449.8V448.6M879.6 437.6H886M882.8 437.6V445.8"/>
<path d="M870.8 431.6Q868.4 437 870.8 443M868 429.4Q864.6 437 868 445M894.8 431.6Q897.2 437 894.8 443M897.6 429.4Q901 437 897.6 445"/>
<path d="M875.4 478.6V491.2L885 484.9Z"/><path d="M888.6 477.8Q892.8 485 888.6 492.2M892.4 473.6Q900.6 485 892.4 496.4"/>
<path d="M879.9 520.8A3.6 3.6 0 0 1 887.1 520.8"/>
<g fill="#e6e7ec" stroke="#1e222d" stroke-width="1" stroke-linejoin="round"><path d="M67.7 381H80.2V396H73.7V387H67.7Z"/><circle cx="84.8" cy="383.8" r="2.7"/><path d="M91.1 381H98.3L92.3 396H85.3Z"/></g>
<path d="M821.2 418.6H828.2L831.7 424.8L828.2 431H821.2L817.7 424.8Z" stroke="#c9ccd4"/><circle cx="824.7" cy="424.8" r="2.2" stroke="#c9ccd4"/>
<rect x="332" y="447" width="1" height="22" fill="#434651" stroke="none" shape-rendering="crispEdges"/>
<path d="M347.2 456.8V452.3Q347.2 450.1 349.4 450.1H362.5Q364.7 450.1 364.7 452.3V463.7Q364.7 465.9 362.5 465.9H356M347.2 454.5H364.7M352.3 448.1V451.8M359.5 448.1V451.8M346.2 462.4H353.4M350.3 459.2L353.6 462.4L350.3 465.7"/>
<path d="M176.8 498.2L180.9 501.8L185 498.2" stroke-width="1.3"/>
<path d="M793.4 502.4L801.7 495L810 502.4" stroke-width="1.4"/>
<path d="M829.2 497.4V495Q829.2 492.6 831.6 492.6H842.6Q845 492.6 845 495V497.4M829.2 502.6V505Q829.2 507.4 831.6 507.4H842.6Q845 507.4 845 505V502.6" stroke-width="1.4"/>
<path d="M0 511Q1.5 517 6 520H0Z" fill="#2f7fe0" stroke="none"/><path d="M905 514Q903.5 518 900.5 520H905Z" fill="#1f5596" stroke="none"/>
</svg>
<span id="t0" class="tx" style="left:36.30px;top:5.34px;font-size:9.40px;line-height:9.40px;color:#ffffff;font-weight:700;transform:scaleX(0.9172);">11</span>
<span id="t1" class="tx" style="left:82.50px;top:12.23px;font-size:13.20px;line-height:13.20px;color:#e4e6ec;font-weight:700;transform:scaleX(0.8685);">GBPUSD</span>
<span id="t2" class="tx" style="left:207.70px;top:12.09px;font-size:13.60px;line-height:13.60px;color:#d9dbe2;font-weight:400;transform:scaleX(0.9687);">5m</span>
<span id="t3" class="tx" style="left:239.00px;top:12.09px;font-size:13.60px;line-height:13.60px;color:#d9dbe2;font-weight:400;transform:scaleX(0.9564);">15m</span>
<span id="t4" class="tx" style="left:277.00px;top:12.09px;font-size:13.60px;line-height:13.60px;color:#d9dbe2;font-weight:400;transform:scaleX(0.9640);">30m</span>
<span id="t5" class="tx" style="left:315.50px;top:12.09px;font-size:13.60px;line-height:13.60px;color:#d9dbe2;font-weight:400;transform:scaleX(0.9190);">1h</span>
<span id="t6" class="tx" style="left:341.60px;top:12.09px;font-size:13.60px;line-height:13.60px;color:#d9dbe2;font-weight:400;transform:scaleX(0.9521);">4h</span>
<span id="t7" class="tx" style="left:390.00px;top:12.09px;font-size:13.60px;line-height:13.60px;color:#d9dbe2;font-weight:400;transform:scaleX(0.8954);">W</span>
<span id="t8" class="tx" style="left:368.30px;top:12.09px;font-size:13.60px;line-height:13.60px;color:#3d6af2;font-weight:400;transform:scaleX(0.8852);">D</span>
<span id="t9" class="tx" style="left:794.50px;top:7.29px;font-size:13.60px;line-height:13.60px;color:#e4e6ec;font-weight:400;transform:scaleX(0.9984);-webkit-text-stroke:0.2px #e4e6ec;">Wealthy Educ...</span>
<span id="t10" class="tx" style="left:833.90px;top:22.41px;font-size:9.20px;line-height:9.20px;color:#2f62f0;font-weight:400;transform:scaleX(0.9593);">Save</span>
<span id="t11" class="tx" style="left:800.30px;top:52.64px;font-size:12.00px;line-height:12.00px;color:#d9dbe2;font-weight:400;transform:scaleX(0.8128);">USD</span>
<span id="t12" class="tx" style="left:64.70px;top:51.56px;font-size:13.40px;line-height:13.40px;color:#4caf50;font-weight:400;transform:scaleX(0.9140);">+0.00442 (+0.36%)</span>
<span id="t13" class="tx" style="left:65.60px;top:76.44px;font-size:12.00px;line-height:12.00px;color:#b2b5be;font-weight:400;transform:scaleX(0.8879);">EMA</span>
<span id="t14" class="tx" style="left:97.90px;top:76.44px;font-size:12.00px;line-height:12.00px;color:#e8414f;font-weight:400;transform:scaleX(1.0210);-webkit-text-stroke:0.25px #e8414f;">1.23158</span>
<span id="t15" class="tx" style="left:65.60px;top:100.64px;font-size:12.00px;line-height:12.00px;color:#b2b5be;font-weight:400;transform:scaleX(0.8879);">EMA</span>
<span id="t16" class="tx" style="left:97.90px;top:100.64px;font-size:12.00px;line-height:12.00px;color:#e9ebf0;font-weight:400;transform:scaleX(1.0210);-webkit-text-stroke:0.25px #e9ebf0;">1.24099</span>
<span id="t17" class="tx" style="left:801.20px;top:150.40px;font-size:11.30px;line-height:11.30px;color:#b2b5be;font-weight:400;transform:scaleX(0.9867);">1.28000</span>
<span id="t18" class="tx" style="left:801.20px;top:195.27px;font-size:11.30px;line-height:11.30px;color:#b2b5be;font-weight:400;transform:scaleX(0.9867);">1.26000</span>
<span id="t19" class="tx" style="left:801.20px;top:240.14px;font-size:11.30px;line-height:11.30px;color:#b2b5be;font-weight:400;transform:scaleX(0.9867);">1.24000</span>
<span id="t20" class="tx" style="left:801.20px;top:285.01px;font-size:11.30px;line-height:11.30px;color:#b2b5be;font-weight:400;transform:scaleX(0.9867);">1.22000</span>
<span id="t21" class="tx" style="left:801.20px;top:329.88px;font-size:11.30px;line-height:11.30px;color:#b2b5be;font-weight:400;transform:scaleX(0.9867);">1.20000</span>
<span id="t22" class="tx" style="left:801.20px;top:374.75px;font-size:11.30px;line-height:11.30px;color:#b2b5be;font-weight:400;transform:scaleX(0.9867);">1.18000</span>
<span id="t23" class="tx" style="left:179.80px;top:417.84px;font-size:12.00px;line-height:12.00px;color:#9a9da6;font-weight:700;transform:scaleX(0.9288);">Apr</span>
<span id="t24" class="tx" style="left:340.40px;top:417.84px;font-size:12.00px;line-height:12.00px;color:#9a9da6;font-weight:700;transform:scaleX(0.9464);">Jun</span>
<span id="t25" class="tx" style="left:424.90px;top:417.84px;font-size:12.00px;line-height:12.00px;color:#9a9da6;font-weight:700;transform:scaleX(0.9629);">Jul</span>
<span id="t26" class="tx" style="left:513.50px;top:417.84px;font-size:12.00px;line-height:12.00px;color:#9a9da6;font-weight:400;transform:scaleX(0.8075);">2</span>
<span id="t27" class="tx" style="left:588.80px;top:417.84px;font-size:12.00px;line-height:12.00px;color:#9a9da6;font-weight:700;transform:scaleX(0.8994);">Sep</span>
<span id="t28" class="tx" style="left:749.60px;top:417.84px;font-size:12.00px;line-height:12.00px;color:#9a9da6;font-weight:700;transform:scaleX(0.9263);">Nov</span>
<span id="t29" class="tx" style="left:70.70px;top:452.83px;font-size:13.20px;line-height:13.20px;color:#dcdee4;font-weight:400;transform:scaleX(0.9075);">1D</span>
<span id="t30" class="tx" style="left:98.00px;top:452.83px;font-size:13.20px;line-height:13.20px;color:#dcdee4;font-weight:400;transform:scaleX(0.9490);">5D</span>
<span id="t31" class="tx" style="left:126.60px;top:452.83px;font-size:13.20px;line-height:13.20px;color:#dcdee4;font-weight:400;transform:scaleX(0.9330);">1M</span>
<span id="t32" class="tx" style="left:155.60px;top:452.83px;font-size:13.20px;line-height:13.20px;color:#dcdee4;font-weight:400;transform:scaleX(0.9439);">3M</span>
<span id="t33" class="tx" style="left:184.30px;top:452.83px;font-size:13.20px;line-height:13.20px;color:#dcdee4;font-weight:400;transform:scaleX(0.9712);">6M</span>
<span id="t34" class="tx" style="left:213.60px;top:452.83px;font-size:13.20px;line-height:13.20px;color:#dcdee4;font-weight:400;transform:scaleX(0.9441);">YTD</span>
<span id="t35" class="tx" style="left:250.40px;top:452.83px;font-size:13.20px;line-height:13.20px;color:#dcdee4;font-weight:400;transform:scaleX(0.9479);">1Y</span>
<span id="t36" class="tx" style="left:278.10px;top:452.83px;font-size:13.20px;line-height:13.20px;color:#dcdee4;font-weight:400;transform:scaleX(0.8860);">5Y</span>
<span id="t37" class="tx" style="left:305.60px;top:452.83px;font-size:13.20px;line-height:13.20px;color:#dcdee4;font-weight:400;transform:scaleX(1.0917);">All</span>
<span id="t38" class="tx" style="left:756.10px;top:452.33px;font-size:12.60px;line-height:12.60px;color:#dcdee4;font-weight:400;transform:scaleX(1.0726);-webkit-text-stroke:0.3px #dcdee4;">15:51:13 (UTC)</span>
<span id="t39" class="tx" style="left:71.80px;top:493.63px;font-size:13.20px;line-height:13.20px;color:#e4e6ec;font-weight:400;transform:scaleX(1.0315);-webkit-text-stroke:0.3px #e4e6ec;">Stock Screener</span>
<span id="t40" class="tx" style="left:210.50px;top:493.63px;font-size:13.20px;line-height:13.20px;color:#e4e6ec;font-weight:400;transform:scaleX(1.0525);-webkit-text-stroke:0.3px #e4e6ec;">Pine Editor</span>
<span id="t41" class="tx" style="left:310.70px;top:493.63px;font-size:13.20px;line-height:13.20px;color:#e4e6ec;font-weight:400;transform:scaleX(1.0571);-webkit-text-stroke:0.3px #e4e6ec;">Strategy Tester</span>
<span id="t42" class="tx" style="left:437.70px;top:493.63px;font-size:13.20px;line-height:13.20px;color:#e4e6ec;font-weight:400;transform:scaleX(1.0168);-webkit-text-stroke:0.3px #e4e6ec;">Trading Panel</span>
<div class="p" style="left:793px;top:103.0px;width:55.0px;height:17.0px;background:#1fb8d0;border-radius:0 2px 2px 0"></div>
<div class="p" style="left:793px;top:181.0px;width:55.0px;height:17.0px;background:#1fb8d0;border-radius:0 2px 2px 0"></div>
<div class="p" style="left:793px;top:249.0px;width:55.0px;height:17.0px;background:#1fb8d0;border-radius:0 2px 2px 0"></div>
<div class="p" style="left:793px;top:361.0px;width:55.0px;height:17.0px;background:#1fb8d0;border-radius:0 2px 2px 0"></div>
<div class="p" style="left:792px;top:291.0px;width:60.0px;height:30.5px;background:#4caf50;border-radius:0 2px 2px 0"></div>
<span id="b0" class="tx" style="left:801.20px;top:105.83px;font-size:11.30px;line-height:11.30px;color:#131722;font-weight:400;transform:scaleX(0.9867);">1.30000</span>
<span id="b1" class="tx" style="left:801.20px;top:183.83px;font-size:11.30px;line-height:11.30px;color:#131722;font-weight:400;transform:scaleX(0.9867);">1.26500</span>
<span id="b2" class="tx" style="left:801.20px;top:251.83px;font-size:11.30px;line-height:11.30px;color:#131722;font-weight:400;transform:scaleX(0.9867);">1.23500</span>
<span id="b3" class="tx" style="left:801.20px;top:363.83px;font-size:11.30px;line-height:11.30px;color:#131722;font-weight:400;transform:scaleX(0.9867);">1.18500</span>
<span id="b4" class="tx" style="left:800.70px;top:293.74px;font-size:12.00px;line-height:12.00px;color:#ffffff;font-weight:700;transform:scaleX(0.9288);">1.21616</span>
<span id="b5" class="tx" style="left:800.70px;top:307.64px;font-size:12.00px;line-height:12.00px;color:#e3f3e4;font-weight:700;transform:scaleX(0.9428);">05:08:47</span>
</body></html>
